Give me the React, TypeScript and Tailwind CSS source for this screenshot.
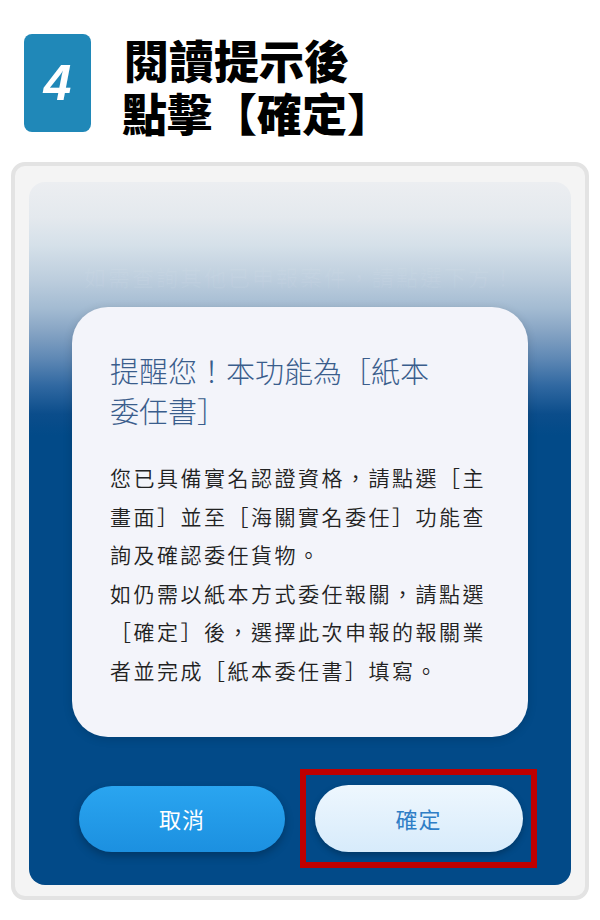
export default function App() {
  const bodyLines = [
    '您已具備實名認證資格，請點選［主',
    '畫面］並至［海關實名委任］功能查',
    '詢及確認委任貨物。',
    '如仍需以紙本方式委任報關，請點選',
    '［確定］後，選擇此次申報的報關業',
    '者並完成［紙本委任書］填寫。',
  ];

  return (
    <div className="w-[600px] h-[920px] bg-white font-['Noto_Sans_CJK_TC','Noto_Sans',sans-serif] overflow-hidden">
      {/* Step header */}
      <div className="flex items-start pl-[24px] pt-[34px] gap-[33px]">
        <div className="w-[67px] h-[98px] rounded-[8px] bg-[#2088b8] flex items-center justify-center">
          <span className="text-white text-[50px] leading-none font-bold italic font-['Liberation_Sans',sans-serif]">
            4
          </span>
        </div>
        <div className="text-[45px] leading-[53px] font-black text-black mt-[-1px]">
          <div>閱讀提示後</div>
          <div className="ml-[-2px]">點擊【確定】</div>
        </div>
      </div>

      {/* Phone frame */}
      <div className="mx-[11px] mt-[23px] border-4 border-[#e3e3e3] bg-[#f4f4f4] rounded-[14px] px-[14px] pt-[16px] pb-[11px]">
        <div className="h-[703px] rounded-[16px] overflow-hidden flex flex-col bg-[linear-gradient(180deg,#eceef1_0%,#e4e9ee_5%,#d5e0e9_9%,#bccddd_14%,#a3bbd2_18%,#89a6c5_21%,#6089b5_25%,#3068a1_29%,#0b4d8b_33%,#024a88_36%,#024a88_100%)]">
          <div className="h-[125px] flex items-end justify-center pb-[14px]">
            <span className="text-[22px] text-white/[0.06] tracking-[2px]">
              如需查詢其他已申報案件，請點選下方！
            </span>
          </div>

          {/* Dialog */}
          <div className="mx-[43px] h-[430px] rounded-[36px] bg-[#f3f4fa] shadow-[0_2px_10px_rgba(0,0,0,0.15)] pl-[38px] pt-[43px]">
            <div className="text-[29px] leading-[40px] text-[#3a5d8c] font-light">
              <div className="whitespace-nowrap">提醒您！本功能為［紙本</div>
              <div>委任書］</div>
            </div>
            <div className="mt-[28px] text-[21px] leading-[38.5px] tracking-[2.5px] text-[#222222] font-[350]">
              {bodyLines.map((line) => (
                <div key={line} className="whitespace-nowrap">
                  {line}
                </div>
              ))}
            </div>
          </div>

          {/* Buttons */}
          <div className="mt-[32px] flex items-center pl-[50px] gap-[15px]">
            <button className="w-[206px] h-[66px] rounded-full bg-[linear-gradient(180deg,#2aa5f0_0%,#1c90e0_100%)] shadow-[0_4px_8px_rgba(0,0,0,0.25)] text-white text-[22px] tracking-[1px]">
              取消
            </button>
            <div className="w-[237px] h-[99px] border-[6px] border-[#bf0000] flex items-center justify-center">
              <button className="w-[208px] h-[67px] rounded-full bg-[linear-gradient(180deg,#eef7fe_0%,#d7ebfb_100%)] shadow-[0_3px_6px_rgba(0,0,0,0.25)] text-[#2f7ec6] text-[22px] tracking-[1px]">
                確定
              </button>
            </div>
          </div>
        </div>
      </div>
    </div>
  );
}
